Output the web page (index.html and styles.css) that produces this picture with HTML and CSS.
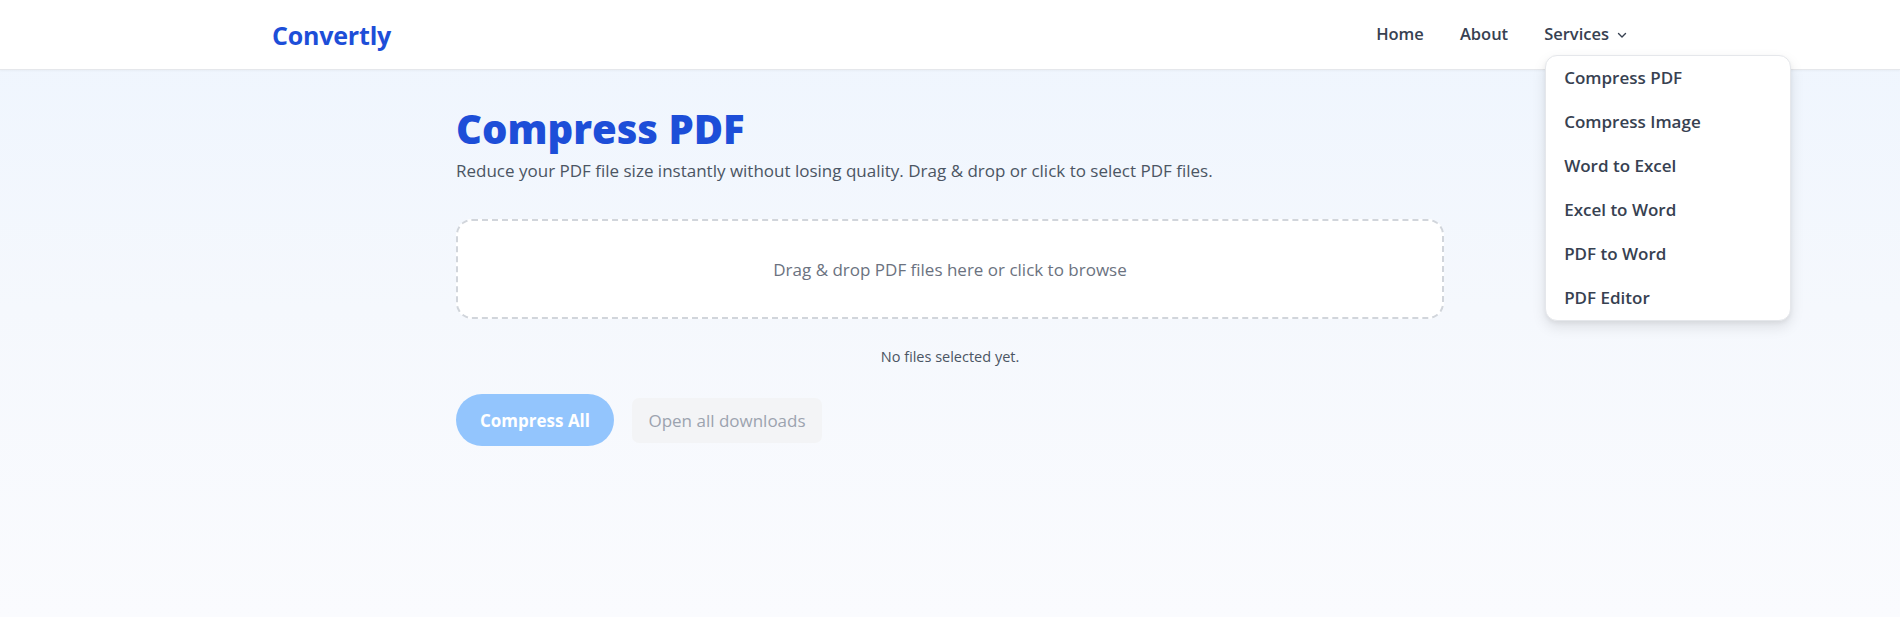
FILE: index.html
```html
<!DOCTYPE html>
<html lang="en">
<head>
<meta charset="utf-8">
<title>Compress PDF - Convertly</title>
<link rel="stylesheet" href="styles.css">
</head>
<body>
<header class="site-header">
  <div class="header-inner">
    <a class="logo" href="#">Convertly</a>
    <nav class="nav">
      <a class="nav-link" href="#">Home</a>
      <a class="nav-link" href="#">About</a>
      <div class="nav-services">
        <a class="nav-link services-toggle" href="#">Services
          <svg class="chev" width="12" height="12" viewBox="0 0 12 12" fill="none" stroke="currentColor" stroke-width="1.4" stroke-linecap="round" stroke-linejoin="round"><path d="M2.5 4.5L6 8l3.5-3.5"/></svg>
        </a>
        <div class="dropdown">
          <a class="dd-item" href="#">Compress PDF</a>
          <a class="dd-item" href="#">Compress Image</a>
          <a class="dd-item" href="#">Word to Excel</a>
          <a class="dd-item" href="#">Excel to Word</a>
          <a class="dd-item" href="#">PDF to Word</a>
          <a class="dd-item" href="#">PDF Editor</a>
        </div>
      </div>
    </nav>
  </div>
</header>
<main class="main">
  <h1 class="title">Compress PDF</h1>
  <p class="subtitle">Reduce your PDF file size instantly without losing quality. Drag &amp; drop or click to select PDF files.</p>
  <div class="dropzone">Drag &amp; drop PDF files here or click to browse</div>
  <p class="status">No files selected yet.</p>
  <div class="actions">
    <button class="btn-primary" disabled>Compress All</button>
    <button class="btn-secondary" disabled>Open all downloads</button>
  </div>
</main>
</body>
</html>
```
FILE: styles.css
```css
* { box-sizing: border-box; }
html, body { height: 100%; }
body {
  margin: 0;
  font-family: "Open Sans", "Noto Sans", "Liberation Sans", sans-serif;
  background: linear-gradient(to bottom, #eef5fe 0%, #f5f8fd 50%, #fafbfe 100%);
  color: #374151;
}
a { text-decoration: none; color: inherit; }

.site-header {
  background: #fff;
  height: 70px;
  border-bottom: 1px solid #e5e7eb;
  box-shadow: 0 1px 2px rgba(0,0,0,0.04);
}
.header-inner {
  max-width: 1400px;
  margin: 0 auto;
  padding: 0 22px;
  height: 67px;
  display: flex;
  align-items: center;
  justify-content: space-between;
}
.logo {
  color: #1d4ed8;
  font-weight: 700;
  font-size: 25px;
  letter-spacing: -0.2px;
  margin-top: 2px;
}
.nav {
  display: flex;
  align-items: center;
  gap: 36px;
}
.nav-link {
  font-size: 16.5px;
  font-weight: 600;
  color: #374151;
  display: inline-flex;
  align-items: center;
}
.chev { margin-left: 7px; margin-top: 2px; }
.nav-services { position: relative; }
.dropdown {
  position: absolute;
  top: 33px;
  left: 1px;
  width: 246px;
  background: #fff;
  border: 1px solid #e5e7eb;
  border-radius: 12px;
  box-shadow: 0 6px 14px rgba(0,0,0,0.10), 0 2px 4px rgba(0,0,0,0.05);
  display: flex;
  flex-direction: column;
}
.dd-item {
  padding: 10px 18px;
  line-height: 24px;
  font-size: 17px;
  font-weight: 550;
  color: #374151;
}

.main {
  max-width: 988px;
  margin: 0 auto;
  padding-top: 33px;
}
.title {
  margin: 0;
  color: #1d4ed8;
  font-size: 40px;
  font-weight: 800;
  line-height: 52px;
}
.subtitle {
  margin: 4px 0 0;
  font-size: 17px;
  line-height: 24px;
  color: #4b5563;
}
.dropzone {
  margin-top: 36px;
  height: 100px;
  border: 2px dashed #d1d5db;
  border-radius: 16px;
  background: #fff;
  display: flex;
  align-items: center;
  justify-content: center;
  font-size: 17px;
  color: #6b7280;
}
.status {
  margin: 28px 0 0;
  text-align: center;
  font-size: 14.5px;
  line-height: 20px;
  color: #4b5563;
}
.actions {
  margin-top: 27px;
  display: flex;
  align-items: center;
  gap: 18px;
}
.btn-primary {
  width: 158px;
  height: 52px;
  border: none;
  border-radius: 26px;
  background: #93c5fd;
  color: #fff;
  font-family: inherit;
  font-size: 17px;
  font-weight: 700;
}
.btn-secondary {
  width: 190px;
  height: 45px;
  border: none;
  border-radius: 7px;
  background: #f3f4f6;
  color: #9ca3af;
  font-family: inherit;
  font-size: 17px;
}
```
